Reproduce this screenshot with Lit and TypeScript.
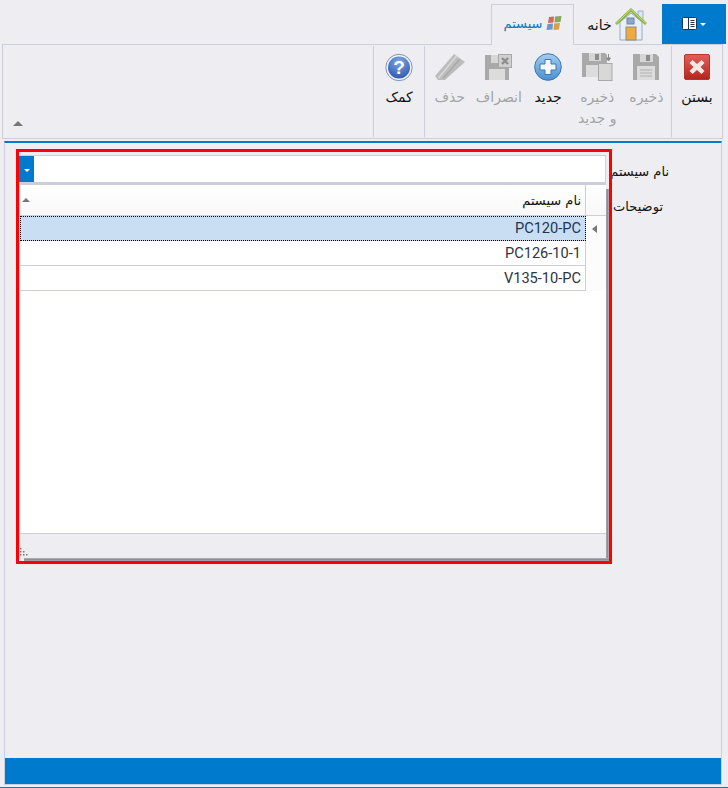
import { LitElement, html, css, svg } from "lit";
import { customElement } from "lit/decorators.js";

const closeIcon = html`<svg width="26" height="26" viewBox="0 0 26 26"><defs><linearGradient id="cr" x1="0" y1="0" x2="0" y2="1"><stop offset="0" stop-color="#e2605a"/><stop offset="1" stop-color="#b3251d"/></linearGradient></defs><rect x=".5" y=".5" width="25" height="25" rx="1.5" fill="url(#cr)" stroke="#b5352e"/><path d="M8.5 6 13 10 17.5 6 20.5 9 16.5 13 20.5 17 17.5 20 13 16 8.5 20 5.5 17 9.5 13 5.5 9Z" fill="#f4e8e6"/></svg>`;

const disk = (x: number, y: number) => svg`<path d="M${x} ${y}h23l3 3v23h-26Z" fill="#a9a9a9"/><rect x="${x + 7}" y="${y}" width="13" height="8" fill="#d6d6d6"/><rect x="${x + 13}" y="${y + 1}" width="4" height="6" fill="#8c8c8c"/>`;

const saveIcon = html`<svg width="26" height="26" viewBox="0 0 26 26">${disk(0, 0)}<rect x="4" y="12" width="18" height="14" fill="#dcdcdc"/><path d="M7 16h12M7 19h12M7 22h12" stroke="#b0b0b0"/></svg>`;

const saveNewIcon = html`<svg width="31" height="30" viewBox="0 0 31 30"><path d="M0 1h23l2 2v22h-25Z" fill="#a9a9a9"/><rect x="7" y="1" width="12" height="8" fill="#d6d6d6"/><rect x="13" y="2" width="4" height="6" fill="#8c8c8c"/><rect x="4" y="13" width="17" height="12" fill="#dcdcdc"/><rect x="16.5" y="11.5" width="13.5" height="17" fill="#d8d8d8" stroke="#a8a8a8"/><path d="M26.5 2v5M24.5 6l2 3 2-3Z" stroke="#8a8a8a" fill="#8a8a8a"/></svg>`;

const plusIcon = html`<svg width="28" height="28" viewBox="0 0 28 28"><defs><linearGradient id="pb" x1="0" y1="0" x2="0" y2="1"><stop offset="0" stop-color="#a5cdf0"/><stop offset="1" stop-color="#4a90d2"/></linearGradient></defs><circle cx="14" cy="14" r="13.3" fill="url(#pb)" stroke="#3c76b5" stroke-width="1"/><path d="M11 6.5h6v4.500h5v6h-5v4.500h-6v-4.500h-5v-6h5Z" fill="#f4f8fc" stroke="#3f78b4"/></svg>`;

const cancelIcon = html`<svg width="27" height="26" viewBox="0 0 27 26"><path d="M0 1h21l3 3v22h-24Z" fill="#a9a9a9"/><rect x="6" y="1" width="11" height="8" fill="#d6d6d6"/><rect x="4" y="15" width="16" height="11" fill="#dcdcdc"/><rect x="13.500" y=".5" width="13" height="13" fill="#cfcfcf" stroke="#a8a8a8"/><path d="M17 4l6 6M23 4l-6 6" stroke="#8d8d8d" stroke-width="2.400"/></svg>`;

const eraserIcon = html`<svg width="30" height="26" viewBox="0 0 30 26"><path d="M19 0 30 8 10 26 3 26 0 22Z" fill="#bdbdbd"/><path d="M21.500 2 3.500 24" stroke="#d8d8d8" stroke-width="1.500"/><path d="M25 5 8 24.500" stroke="#a8a8a8" stroke-width="1.500"/></svg>`;

const helpIcon = html`<svg width="28" height="29" viewBox="0 0 28 29"><defs><radialGradient id="hb" cx=".5" cy=".25" r=".8"><stop offset="0" stop-color="#7fa8e4"/><stop offset="1" stop-color="#2a55ad"/></radialGradient></defs><circle cx="14" cy="14.500" r="13.200" fill="#eef1f7" stroke="#8193b8"/><circle cx="14" cy="14.500" r="11" fill="url(#hb)"/><text x="14" y="21" text-anchor="middle" class="q">?</text></svg>`;

const winIcon = html`<svg width="16" height="15" viewBox="0 0 16 15"><path d="M3 1l5-.5-.5 6-5.500.5Z" fill="#cf6a5c"/><path d="M9 .5l6.500-.5-1 6-6 .5Z" fill="#86a85a"/><path d="M1.500 8l5.500-.5-.5 6L.5 14Z" fill="#6b98c8"/><path d="M8 7.500l6-.5-1 6.500-5.500.5Z" fill="#d9a04a"/></svg>`;

const houseIcon = html`<svg width="32" height="33" viewBox="0 0 32 33"><path d="M23 3h5v10h-5Z" fill="#dfe6f1" stroke="#9fb0c9"/><path d="M5 14 16 5l11 9v18H5Z" fill="#e8eef8" stroke="#98a9c6"/><path d="M1 16 16 2 31 16" fill="none" stroke="#8ab43c" stroke-width="3"/><path d="M1 15.500 16 1.500 31 15.500" fill="none" stroke="#c6de8a" stroke-width="1"/><rect x="12" y="10" width="7" height="6" fill="#8ea6c9" stroke="#6e86aa"/><rect x="11" y="19" width="10" height="13" fill="#f0a840" stroke="#8c8d7f"/></svg>`;

const panelIcon = html`<svg width="15" height="13" viewBox="0 0 15 13"><rect x=".5" y=".5" width="14" height="12" rx="1" fill="#fff" stroke="#123a5e"/><path d="M6.500 1v11" stroke="#123a5e"/><path d="M8.500 3.500h4M8.500 5.500h4M8.500 7.500h4M8.500 9.500h4" stroke="#333"/></svg>`;

@customElement("app-root")
export class AppRoot extends LitElement {
  static styles = css`
    :host {
      display: flex;
      flex-direction: column;
      position: relative;
      width: 728px;
      height: 788px;
      overflow: hidden;
      background: #eeeef2;
      font-family: "DejaVu Sans", Roboto, sans-serif;
      font-size: 13px;
      color: #111;
    }
    .tabs {
      display: flex;
      direction: rtl;
      height: 40px;
      margin-top: 4px;
      padding-right: 2px;
      flex: none;
      position: relative;
      z-index: 1;
    }
    .app-btn {
      width: 64px;
      background: #007acc;
      display: flex;
      direction: ltr;
      align-items: center;
      justify-content: center;
      gap: 3px;
      padding-bottom: 1px;
      box-sizing: border-box;
    }
    .caret-w {
      width: 0;
      height: 0;
      border-left: 3px solid transparent;
      border-right: 3px solid transparent;
      border-top: 3px solid #fff;
      margin-top: 2px;
    }
    .tab {
      display: flex;
      align-items: center;
      direction: ltr;
      justify-content: center;
      box-sizing: border-box;
    }
    .tab.home {
      width: 86px;
      margin-right: 2px;
      gap: 3px;
      font-size: 14px;
      padding-top: 1px;
      margin-left: 0;
    }
    .tab.sys {
      width: 83px;
      height: 41px;
      gap: 3px;
      color: #007acc;
      background: #eeeef2;
      border: 1px solid #cccedb;
      border-bottom: none;
      padding-bottom: 3px;
    }
    .ribbon {
      display: flex;
      direction: rtl;
      flex: none;
      box-sizing: border-box;
      height: 95px;
      width: 721px;
      margin-left: 2px;
      border: 1px solid #cccedb;
      position: relative;
    }
    .group {
      display: flex;
      border-left: 1px solid #cccedb;
      margin: 1px 0;
    }
    .rb {
      width: 49.200px;
      display: flex;
      flex-direction: column;
      align-items: center;
      text-align: center;
      font-size: 14px;
      line-height: 21px;
      white-space: nowrap;
    }
    .rb.wide { width: 50px; }
    .ic {
      height: 30px;
      margin-top: 6px;
      margin-bottom: 5px;
      display: flex;
      align-items: center;
      justify-content: center;
    }
    .rb.off { color: #a2a4a5; }
    .q {
      font: bold 19px "Liberation Sans", sans-serif;
      fill: #fff;
    }
    .collapse {
      position: absolute;
      left: 10px;
      bottom: 12px;
      width: 0;
      height: 0;
      border-left: 5px solid transparent;
      border-right: 5px solid transparent;
      border-bottom: 5px solid #777;
    }
    .panel {
      flex: 1;
      display: flex;
      flex-direction: column;
      margin: 2px 6px 2px 4px;
      border-top: 2px solid #007acc;
      border-left: 1px solid #cccedb;
      border-right: 1px solid #cccedb;
      border-bottom: 1px solid #cccedb;
      position: relative;
    }
    .form {
      flex: 1;
      display: flex;
      flex-direction: column;
      gap: 9px;
      padding: 12px 52px 0 14px;
    }
    .row {
      display: flex;
      direction: rtl;
      height: 27px;
      align-items: center;
    }
    .lbl {
      width: 57px;
      margin-left: 6px;
      overflow: hidden;
      white-space: nowrap;
      flex: none;
      padding-top: 6px;
      box-sizing: border-box;
      display: flex;
    }
    .lbl.short { padding-right: 6px; margin-top: -3px; }
    .combo {
      flex: 1;
      display: flex;
      direction: ltr;
      height: 27px;
      box-sizing: border-box;
      background: #fff;
      border: 1px solid #cccedb;
      border-left: none;
      border-bottom: none;
    }
    .drop {
      width: 15px;
      background: #007acc;
      display: flex;
      align-items: center;
      justify-content: center;
    }
    .status {
      height: 26px;
      background: #007acc;
      flex: none;
    }
    .foot {
      height: 1px;
      flex: none;
      background: #007acc;
    }
    .popup {
      position: absolute;
      left: 14px;
      top: 39px;
      width: 587px;
      height: 376px;
      box-sizing: border-box;
      background: #fff;
      border-top: 3px solid #cccedb;
      border-left: 1px solid #cccedb;
      display: flex;
      flex-direction: column;
      font-family: Roboto, "DejaVu Sans", sans-serif;
    }
    .popup::before {
      content: "";
      position: absolute;
      left: 100%;
      top: 4px;
      bottom: -3px;
      width: 3px;
      background: linear-gradient(to right, #a8a8ae, #8f8f95, #b4b4ba);
    }
    .popup::after {
      content: "";
      position: absolute;
      left: 4px;
      right: -3px;
      top: 100%;
      height: 3px;
      background: linear-gradient(to bottom, #b4b4ba, #8f8f95, #a8a8ae);
    }
    .grid { flex: 1; display: flex; flex-direction: column; }
    .g-row {
      display: flex;
      height: 25px;
      flex: none;
      box-sizing: border-box;
    }
    .g-head {
      height: 31px;
      background: linear-gradient(#ffffff, #f8f8f8);
      border-bottom: 1px solid #cccedb;
    }
    .cell {
      width: 566px;
      flex: none;
      box-sizing: border-box;
      border-right: 1px solid #cccedb;
      border-bottom: 1px solid #cccedb;
      text-align: right;
      padding-right: 4px;
      line-height: 24px;
      font-size: 14.600px;
      color: #2e3440;
    }
    .g-head .cell {
      border-bottom: none;
      font-family: "DejaVu Sans", sans-serif;
      font-size: 13px;
      line-height: 25px;
      color: #111;
      display: flex;
      justify-content: space-between;
      align-items: center;
      padding-left: 2px;
    }
    .up {
      width: 0;
      height: 0;
      border-left: 4px solid transparent;
      border-right: 4px solid transparent;
      border-bottom: 4px solid #777;
    }
    .ind {
      flex: 1;
      background: #fcfcfc;
      display: flex;
      align-items: center;
      padding-left: 6px;
    }
    .left {
      width: 0;
      height: 0;
      border-top: 4px solid transparent;
      border-bottom: 4px solid transparent;
      border-right: 5px solid #777;
    }
    .sel .cell {
      background: #c9ddf3;
      outline: 1px dotted #000;
      outline-offset: -1px;
      color: #1a3556;
    }
    .pop-foot {
      height: 25px;
      flex: none;
      background: #eeeef2;
      border-top: 1px solid #cccedb;
      box-sizing: border-box;
      display: flex;
      align-items: flex-end;
      padding-bottom: 2px;
    }
    .grip { display: block; }
    .mark {
      position: absolute;
      left: 16px;
      top: 149px;
      width: 596px;
      height: 415px;
      box-sizing: border-box;
      border: 3px solid #f00;
      pointer-events: none;
    }
  `;

  render() {
    return html`
      <div class="tabs">
        <div class="app-btn">${panelIcon}<span class="caret-w"></span></div>
        <div class="tab home"><span>خانه</span>${houseIcon}</div>
        <div class="tab sys"><span>سیستم</span>${winIcon}</div>
      </div>
      <div class="ribbon">
        <div class="group">
          <div class="rb wide"><span class="ic">${closeIcon}</span><span>بستن</span></div>
        </div>
        <div class="group">
          <div class="rb off"><span class="ic">${saveIcon}</span><span>ذخیره</span></div>
          <div class="rb off"><span class="ic">${saveNewIcon}</span><span>ذخیره<br />و جدید</span></div>
          <div class="rb"><span class="ic">${plusIcon}</span><span>جدید</span></div>
          <div class="rb off"><span class="ic">${cancelIcon}</span><span>انصراف</span></div>
          <div class="rb off"><span class="ic">${eraserIcon}</span><span>حذف</span></div>
        </div>
        <div class="group">
          <div class="rb wide"><span class="ic">${helpIcon}</span><span>کمک</span></div>
        </div>
        <span class="collapse"></span>
      </div>
      <div class="panel">
        <div class="form">
          <div class="row">
            <div class="lbl">نام سیستم</div>
            <div class="combo"><div class="drop"><span class="caret-w"></span></div></div>
          </div>
          <div class="row">
            <div class="lbl short">توضیحات</div>
          </div>
        </div>
        <div class="status"></div>
        <div class="popup">
          <div class="grid">
            <div class="g-row g-head">
              <div class="cell"><span class="up"></span><span>نام سیستم</span></div>
            </div>
            <div class="g-row sel"><div class="cell">PC120-PC</div><div class="ind"><span class="left"></span></div></div>
            <div class="g-row"><div class="cell">PC126-10-1</div><div class="ind"></div></div>
            <div class="g-row"><div class="cell">V135-10-PC</div><div class="ind"></div></div>
          </div>
          <div class="pop-foot">
            <svg class="grip" width="8" height="8" viewBox="0 0 8 8" fill="#777">
              <rect x="0" y="0" width="1.500" height="1.500"/><rect x="0" y="3" width="1.500" height="1.500"/><rect x="3" y="3" width="1.500" height="1.500"/><rect x="0" y="6" width="1.500" height="1.500"/><rect x="3" y="6" width="1.500" height="1.500"/><rect x="6" y="6" width="1.500" height="1.500"/>
            </svg>
          </div>
        </div>
      </div>
      <div class="foot"></div>
      <div class="mark"></div>
    `;
  }
}
